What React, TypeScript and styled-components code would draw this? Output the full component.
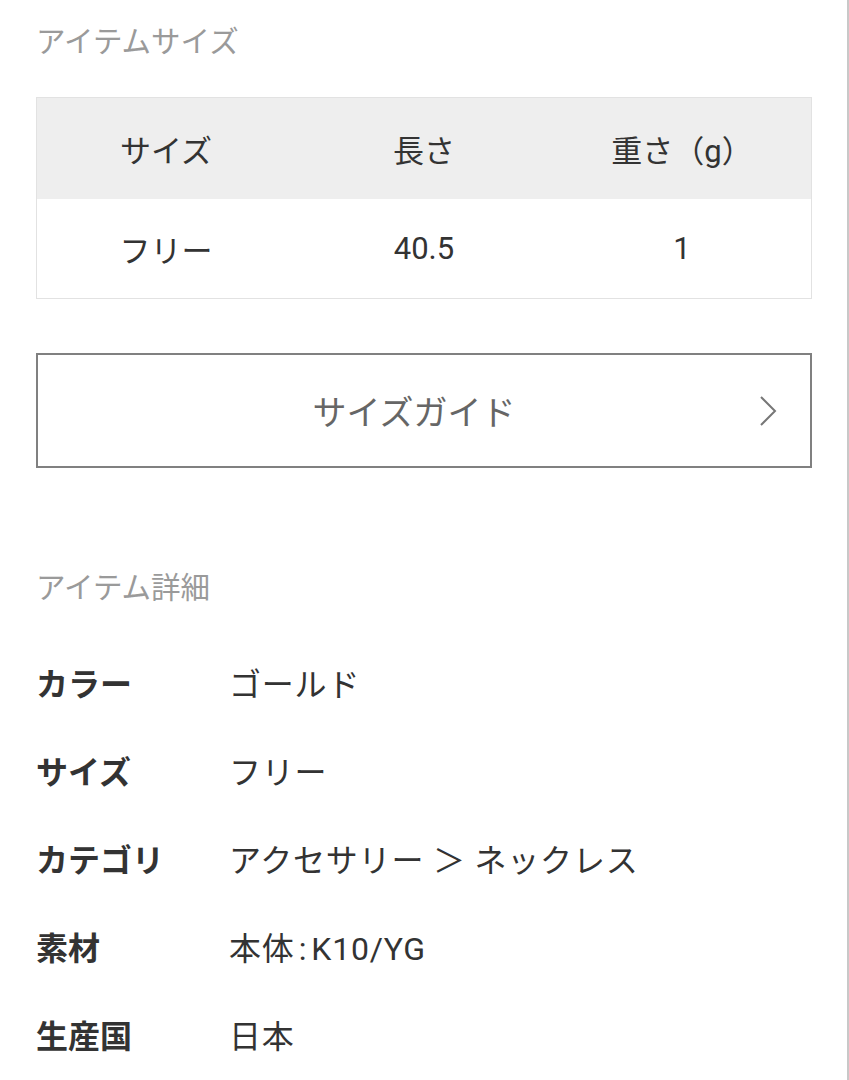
import React from "react";
import styled, { createGlobalStyle } from "styled-components";

const Global = createGlobalStyle`
  html, body { margin: 0; padding: 0; background: #fff; }
  body { font-family: Roboto, "Noto Sans CJK JP", sans-serif; color: #333; }
`;

const Page = styled.div`
  width: 849px;
  min-height: 1080px;
  border-right: 2px solid #c8c8c8;
  padding: 0 35px 0 36px;
  box-sizing: border-box;
  display: flex;
  flex-direction: column;
`;

const SectionTitle = styled.h2<{ $top: number }>`
  margin: ${(p) => p.$top}px 0 0;
  font-size: 29.5px;
  font-weight: 400;
  line-height: 40px;
  color: #9a9a9a;
`;

const Table = styled.div`
  margin-top: 35px;
  border: 1px solid #e2e2e2;
  display: grid;
  grid-template-columns: repeat(3, 1fr);
`;

const Cell = styled.div<{ $head?: boolean }>`
  height: ${(p) => (p.$head ? 101 : 99)}px;
  display: flex;
  align-items: center;
  justify-content: center;
  background: ${(p) => (p.$head ? "#eeeeee" : "#fff")};
  font-size: 31px;
  color: #333;
`;

const GuideButton = styled.button`
  margin-top: 54px;
  height: 115px;
  width: 100%;
  border: 2px solid #808080;
  background: #fff;
  display: flex;
  align-items: center;
  justify-content: center;
  position: relative;
  font-family: inherit;
  font-size: 34px;
  color: #666;
  padding: 0 20px 0 0;
`;

const Chevron = styled.svg`
  position: absolute;
  right: 33px;
  top: 50%;
  transform: translateY(-50%);
`;

const DetailList = styled.dl`
  margin: 30px 0 0;
  display: grid;
  grid-template-columns: 193px 1fr;
  grid-auto-rows: 88px;
  align-items: center;
`;

const Term = styled.dt`
  font-size: 32px;
  font-weight: 700;
  color: #333;
`;

const Desc = styled.dd`
  margin: 0;
  font-size: 32px;
  letter-spacing: 0.8px;
  color: #333;
`;

const details: [string, string][] = [
  ["カラー", "ゴールド"],
  ["サイズ", "フリー"],
  ["カテゴリ", "アクセサリー ＞ ネックレス"],
  ["素材", "本体\u200A:\u200AK10/YG"],
  ["生産国", "日本"],
];

export default function App() {
  return (
    <>
      <Global />
      <Page>
        <SectionTitle $top={22}>アイテムサイズ</SectionTitle>
        <Table>
          <Cell $head>サイズ</Cell>
          <Cell $head>長さ</Cell>
          <Cell $head>重さ（g）</Cell>
          <Cell>フリー</Cell>
          <Cell>40.5</Cell>
          <Cell>1</Cell>
        </Table>
        <GuideButton>
          サイズガイド
          <Chevron width="18" height="32" viewBox="0 0 18 32">
            <path d="M2 2 L16 16 L2 30" fill="none" stroke="#777" strokeWidth="2" />
          </Chevron>
        </GuideButton>
        <SectionTitle $top={100}>アイテム詳細</SectionTitle>
        <DetailList>
          {details.map(([k, v]) => (
            <React.Fragment key={k}>
              <Term>{k}</Term>
              <Desc>{v}</Desc>
            </React.Fragment>
          ))}
        </DetailList>
      </Page>
    </>
  );
}
